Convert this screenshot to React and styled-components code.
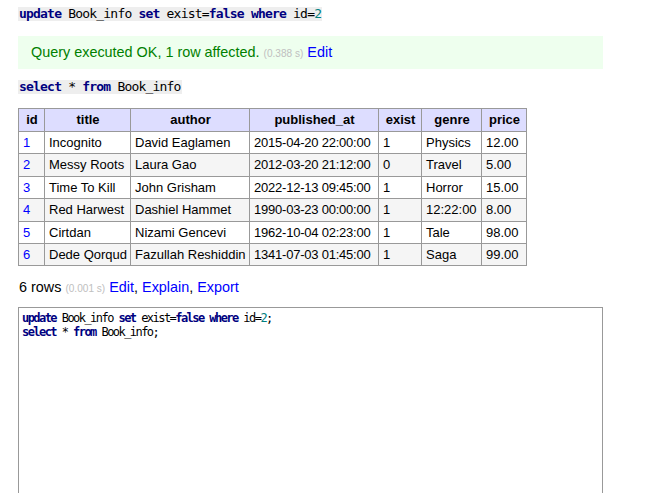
import React from "react";
import styled, { createGlobalStyle } from "styled-components";

const Global = createGlobalStyle`
  body {
    margin: 0;
    background: #fff;
    color: #000;
    font-family: "Liberation Sans", Arial, sans-serif;
    font-size: 14.4px;
  }
`;

const Content = styled.div`
  padding: 7px 0 0 18px;
  width: 585px;
`;

const Code = styled.code`
  display: block;
  width: fit-content;
  background: #eee;
  font-family: "DejaVu Sans Mono", monospace;
  font-size: 13px;
  letter-spacing: -0.8px;
  line-height: 14px;
  padding: 0 1px;
  color: #000;
  margin-top: ${(p) => p.$top || 0}px;
`;

const Kw = styled.b`
  color: #000080;
`;

const Num = styled.span`
  color: #008080;
`;

const Message = styled.div`
  margin-top: 15px;
  background: #efe;
  color: #008000;
  line-height: 33px;
  height: 33px;
  padding-left: 13px;
`;

const Time = styled.span`
  color: #c0c0c0;
  font-size: 10.1px;
`;

const Link = styled.a`
  color: #00f;
  text-decoration: none;
`;

const Table = styled.table`
  margin-top: 14px;
  border-collapse: collapse;
  table-layout: fixed;
  width: 508px;
  border: 1px solid #999;
  font-size: 13px;
`;

const Col = styled.col`
  width: ${(p) => p.$w}px;
`;

const Th = styled.th`
  background: #ddf;
  border: 1px solid #999;
  padding: 3px 3px 3px 4px;
  line-height: 16px;
  font-weight: bold;
  text-align: center;
  white-space: nowrap;
`;

const Row = styled.tr`
  background: ${(p) => (p.$odd ? "#f5f5f5" : "#fff")};
`;

const Td = styled.td`
  border: 1px solid #999;
  padding: 3px 3px 3px 4px;
  line-height: 15.4px;
  text-align: left;
  white-space: nowrap;
  overflow: hidden;
  letter-spacing: ${(p) => (p.$tight ? "-0.22px" : "normal")};
`;

const IdLink = styled.a`
  color: #00f;
  text-decoration: none;
`;

const Footer = styled.p`
  margin: 12px 0 0 1px;
  line-height: 18px;
`;

const Editor = styled.div`
  margin-top: 9px;
  height: 200px;
  border: 1px solid #999;
  padding: 3px 3px;
  font-family: "DejaVu Sans Mono", monospace;
  font-size: 12px;
  letter-spacing: -1.55px;
  line-height: 14px;
  white-space: pre;
`;

const cols = [
  ["id", 26],
  ["title", 86],
  ["author", 119],
  ["published_at", 129],
  ["exist", 43],
  ["genre", 60],
  ["price", 45],
];
const rows = [
  [1, "Incognito", "David Eaglamen", "2015-04-20 22:00:00", 1, "Physics", "12.00"],
  [2, "Messy Roots", "Laura Gao", "2012-03-20 21:12:00", 0, "Travel", "5.00"],
  [3, "Time To Kill", "John Grisham", "2022-12-13 09:45:00", 1, "Horror", "15.00"],
  [4, "Red Harwest", "Dashiel Hammet", "1990-03-23 00:00:00", 1, "12:22:00", "8.00"],
  [5, "Cirtdan", "Nizami Gencevi", "1962-10-04 02:23:00", 1, "Tale", "98.00"],
  [6, "Dede Qorqud", "Fazullah Reshiddin", "1341-07-03 01:45:00", 1, "Saga", "99.00"],
];

export default function App() {
  return (
    <>
      <Global />
      <Content>
        <Code>
          <Kw>update</Kw> Book_info <Kw>set</Kw> exist=<Kw>false</Kw> <Kw>where</Kw> id=<Num>2</Num>
        </Code>
        <Message>
          Query executed OK, 1 row affected. <Time>(0.388 s)</Time> <Link href="#">Edit</Link>
        </Message>
        <Code $top={11}>
          <Kw>select</Kw> * <Kw>from</Kw> Book_info
        </Code>
        <Table>
          <colgroup>
            {cols.map(([c, w]) => (
              <Col key={c} $w={w} />
            ))}
          </colgroup>
          <thead>
            <tr>
              {cols.map(([c]) => (
                <Th key={c}>{c}</Th>
              ))}
            </tr>
          </thead>
          <tbody>
            {rows.map((r, i) => (
              <Row key={r[0]} $odd={i % 2 === 1}>
                {r.map((v, j) => (
                  <Td key={j} $tight={j === 3}>
                    {j === 0 ? <IdLink href="#">{v}</IdLink> : v}
                  </Td>
                ))}
              </Row>
            ))}
          </tbody>
        </Table>
        <Footer>
          6 rows <Time>(0.001 s)</Time> <Link href="#">Edit</Link>, <Link href="#">Explain</Link>,{" "}
          <Link href="#">Export</Link>
        </Footer>
        <Editor>
          <Kw>update</Kw> Book_info <Kw>set</Kw> exist=<Kw>false</Kw> <Kw>where</Kw> id=<Num>2</Num>;{"\n"}
          <Kw>select</Kw> * <Kw>from</Kw> Book_info;
        </Editor>
      </Content>
    </>
  );
}
